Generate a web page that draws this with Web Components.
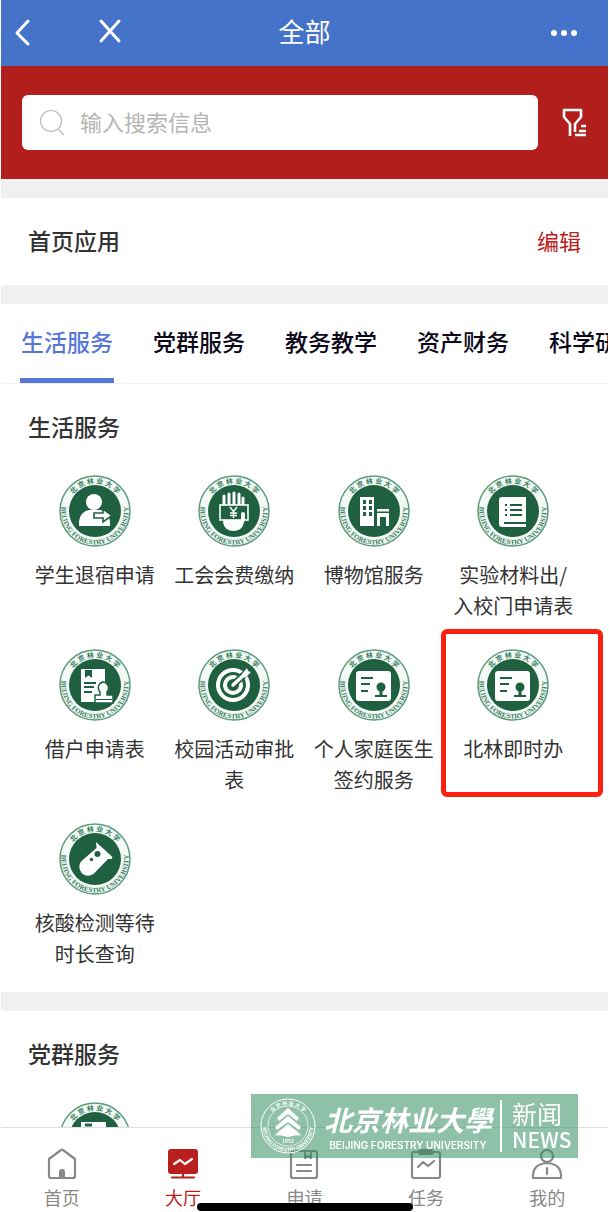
<!DOCTYPE html>
<html lang="zh-CN">
<head>
<meta charset="utf-8">
<meta name="viewport" content="width=device-width, initial-scale=1">
<title>全部</title>
<style>
  html, body { height: 100%; }
  body { margin: 0; background: #fff; color: #333; font-family: "Noto Sans CJK SC", "Noto Sans", sans-serif; }
</style>
</head>
<body>
<hall-page>
  <nav-bar slot="top">全部</nav-bar>
  <search-bar slot="top" placeholder="输入搜索信息"></search-bar>

  <hall-section>
    <section-head>首页应用<a slot="action" href="#edit">编辑</a></section-head>
  </hall-section>

  <hall-section>
    <category-tabs>
      <category-tab active>生活服务</category-tab>
      <category-tab>党群服务</category-tab>
      <category-tab>教务教学</category-tab>
      <category-tab>资产财务</category-tab>
      <category-tab>科学研究</category-tab>
    </category-tabs>
    <section-head>生活服务</section-head>
    <app-grid>
      <app-item glyph="leave">学生退宿申请</app-item>
      <app-item glyph="fee">工会会费缴纳</app-item>
      <app-item glyph="museum">博物馆服务</app-item>
      <app-item glyph="book">实验材料出/入校门申请表</app-item>
      <app-item glyph="borrow">借户申请表</app-item>
      <app-item glyph="target">校园活动审批表</app-item>
      <app-item glyph="card">个人家庭医生签约服务</app-item>
      <app-item glyph="card" marked>北林即时办</app-item>
      <app-item glyph="tube">核酸检测等待时长查询</app-item>
    </app-grid>
  </hall-section>

  <hall-section>
    <section-head>党群服务</section-head>
    <app-grid><app-item glyph="form"></app-item></app-grid>
  </hall-section>

  <tab-bar slot="bottom">
    <tab-item icon="home">首页</tab-item>
    <tab-item icon="hall" active>大厅</tab-item>
    <tab-item icon="apply">申请</tab-item>
    <tab-item icon="task">任务</tab-item>
    <tab-item icon="me">我的</tab-item>
  </tab-bar>
  <news-mark slot="bottom"></news-mark>
</hall-page>

<script>
const define = (name, html, setup) => {
  const tpl = document.createElement('template');
  tpl.innerHTML = html;
  customElements.define(name, class extends HTMLElement {
    constructor() {
      super();
      this.attachShadow({ mode: 'open' }).append(tpl.content.cloneNode(true));
    }
    connectedCallback() { if (setup) setup(this, this.shadowRoot); }
  });
};

define('hall-page', `
<style>
  :host { display: flex; flex-direction: column; position: relative; box-sizing: border-box; height: 100vh; padding: 0 1px; overflow: hidden; }
  header, footer { flex: none; }
  main { flex: 1; min-height: 0; overflow-y: auto; scrollbar-width: none; background: #f0f0f0; padding-top: 19px; display: flex; flex-direction: column; gap: 19px; }
  .home { position: absolute; left: 50%; bottom: 1px; width: 216px; height: 8px; margin-left: -108px; border-radius: 4px; background: #000; }
</style>
<header><slot name="top"></slot></header>
<main><slot></slot></main>
<footer><slot name="bottom"></slot></footer>
<div class="home"></div>`);

define('nav-bar', `
<style>
  :host { display: grid; grid-template-columns: 1fr auto 1fr; align-items: center; height: 66px; background: #4573c9; color: #fff; }
  .left { display: flex; gap: 52px; padding-left: 7px; }
  .right { display: flex; justify-content: flex-end; padding-right: 28px; }
  button { border: 0; padding: 0; background: none; color: inherit; width: 32px; height: 32px; }
  svg { display: block; fill: none; stroke: currentColor; stroke-width: 3; stroke-linecap: round; stroke-linejoin: round; }
  h1 { margin: 0; padding-bottom: 4px; font-size: 26px; font-weight: 400; line-height: 32px; }
</style>
<div class="left">
  <button aria-label="返回"><svg width="32" height="32"><path d="M20 4 9 16l11 11"/></svg></button>
  <button aria-label="关闭"><svg width="32" height="32"><path d="M9 4l18 20M27 4 9 24"/></svg></button>
</div>
<h1><slot></slot></h1>
<div class="right">
  <button aria-label="更多"><svg width="32" height="32"><g fill="currentColor" stroke="none"><circle cx="6" cy="16" r="3"/><circle cx="16" cy="16" r="3"/><circle cx="26" cy="16" r="3"/></g></svg></button>
</div>`);

define('search-bar', `
<style>
  :host { display: flex; align-items: center; gap: 20px; padding: 29px 18px 29px 21px; background: #b21e1b; }
  label { flex: 1; display: flex; align-items: center; gap: 12px; height: 55px; padding: 0 14px; border-radius: 6px; background: #fff; color: #bbb; }
  label svg { flex: none; }
  input { flex: 1; min-width: 0; border: 0; outline: 0; padding: 0 0 4px; background: none; font: 400 22px/32px "Noto Sans CJK SC", sans-serif; color: #333; }
  input::placeholder { color: #b5b5b5; opacity: 1; }
  button { flex: none; border: 0; padding: 0; background: none; width: 32px; height: 32px; color: #fff; }
  svg { display: block; fill: none; stroke: currentColor; }
</style>
<label>
  <svg width="32" height="32" stroke-width="1.200"><circle cx="15" cy="14" r="10.500"/><path d="M22 22l6 6"/></svg>
  <input type="search" aria-label="搜索">
</label>
<button aria-label="筛选"><svg width="32" height="32" stroke-width="2.600" stroke-linejoin="round">
  <path d="M12 29V17L6 10V3h17v7l-6 7v8M23 19h5M21 24h7M17 28h11"/></svg></button>`,
(el, root) => { root.querySelector('input').placeholder = el.getAttribute('placeholder'); });

define('hall-section', `
<style>:host { display: block; background: #fff; flex: none; }</style>
<slot></slot>`);

define('section-head', `
<style>
  :host { display: flex; align-items: center; justify-content: space-between; box-sizing: border-box; height: 87px; padding: 0 27px 3px; }
  h2 { margin: 0; font-size: 23px; font-weight: 500; line-height: 32px; color: #333; }
  ::slotted(a) { color: #b9201d; font-size: 22px; line-height: 32px; text-decoration: none; }
</style>
<h2><slot></slot></h2><slot name="action"></slot>`);

define('category-tabs', `
<style>
  :host { display: flex; gap: 38px; padding: 0 19px; overflow: hidden; border-bottom: 1px solid #f3f3f3; }
</style>
<slot></slot>`);

define('category-tab', `
<style>
  :host { display: block; flex: none; }
  button { display: block; height: 79px; box-sizing: border-box; border: 0; border-bottom: 5px solid transparent; padding: 0 1px; background: none; color: #0b0618; font: 500 23px/32px "Noto Sans CJK SC", sans-serif; white-space: nowrap; }
  :host([active]) button { color: #5677d8; border-color: #5677d8; }
</style>
<button><slot></slot></button>`);

define('app-grid', `
<style>
  :host { display: grid; grid-template-columns: repeat(4, 1fr); row-gap: 28px; padding: 4px 25px 23px 24px; }
</style>
<slot></slot>`);

const GLYPHS = {
  leave: `<circle cx="35" cy="27" r="8"/><path d="M20 51v-3c0-7 4-12 10-13h11c6 1 10 6 10 13v3z"/>
    <path d="M35 38h9v-4l9 6.500-9 6.500v-4h-9z" stroke="#1f6040" stroke-width="1.600"/>`,
  fee: `<path d="M26 30V21M31 30V19M36 30V18M41 30V19M45 30V23" stroke="#fff" stroke-width="3" stroke-linecap="round"/>
    <path d="M25 45c0 7 4 11 10.500 11S46 52 46 45z"/><rect x="22" y="30" width="28" height="15" fill="#1f6040" stroke="#fff" stroke-width="1.600"/>
    <path d="M32 32l3.500 4.500L39 32M35.500 36v7M32 38h7M32 40.500h7" fill="none" stroke="#fff" stroke-width="1.500"/><rect x="43" y="37" width="4" height="10" rx="2"/>`,
  museum: `<path d="M22 22h14v29H22z"/><path d="M39 34h12v2.500H39zM39 38h12v13h-3V42h-6v9h-3z"/>
    <path d="M25 25h3v4h-3zM31 25h3v4h-3zM25 31h3v4h-3zM31 31h3v4h-3zM25 37h3v4h-3zM31 37h3v4h-3z" fill="#1f6040"/>`,
  book: `<path d="M25 22h24v25H27v2h22v3H25q-3 0-3-3V25q0-3 3-3z"/>
    <path d="M28 30h2M33 30h12M28 35h2M33 35h12M28 40h2M33 40h12" stroke="#1f6040" stroke-width="2"/>`,
  borrow: `<path d="M22 20h24v33H22z"/><path d="M26 21h7v8l-3.500-2.500L26 29z" fill="#1f6040"/>
    <path d="M25 34h12M25 38h10M25 43h8" stroke="#1f6040" stroke-width="2"/>
    <path d="M44 33a6 6 0 0 1 4 10V46h6v8H36v-8h5v-3a6 6 0 0 1 3-10z" stroke="#1f6040" stroke-width="1.500"/><path d="M37 50.500h16" stroke="#1f6040"/>`,
  target: `<g fill="none" stroke="#fff"><circle cx="35" cy="36" r="15" stroke-width="4"/><circle cx="35" cy="36" r="8" stroke-width="4"/>
    <path d="M35 36L50 22" stroke="#1f6040" stroke-width="7"/><path d="M35 36L48 24" stroke-width="3.500" stroke-linecap="round"/></g><path d="M44 25l5-6 1 3 3 1-6 6z"/>`,
  card: `<rect x="18" y="22" width="35" height="30" rx="3"/><path d="M23 29h12M23 35h9M23 42h7M37 47h12" stroke="#1f6040" stroke-width="2.200"/>
    <circle cx="43" cy="38" r="4.500" fill="#1f6040"/><path d="M43 40v7" stroke="#1f6040" stroke-width="3"/>`,
  tube: `<path d="M37 19L53.500 34l-1 2H49L35 50.500Q29 55 23 50.500 18 44 22 38.500L37.500 25z"/><circle cx="38.500" cy="31" r="3" fill="#1f6040"/><circle cx="32.500" cy="36.500" r="1.700" fill="#1f6040"/>`,
  form: `<path d="M22 20h25v33H22z"/><path d="M26 23h7" stroke="#1f6040" stroke-width="3"/>`
};

define('app-item', `
<style>
  :host { display: block; position: relative; min-width: 0; }
  a { display: flex; flex-direction: column; align-items: center; gap: 12px; color: #333; text-decoration: none; }
  svg { display: block; width: 72px; height: 72px; }
  span { box-sizing: border-box; width: 100%; min-height: 62px; padding: 0 8px; font-size: 20px; line-height: 31px; text-align: center; }
  .mark { display: none; }
  :host([marked]) .mark { display: block; position: absolute; inset: -20px -20px 0 -3px; box-sizing: border-box; height: 168px; border: 5px solid #ff2014; border-radius: 6px; pointer-events: none; }
  text { font-family: "Liberation Serif", "Noto Sans CJK SC", serif; font-weight: 700; fill: #3a7d5e; }
</style>
<a href="#app">
  <svg viewBox="0 0 72 72" aria-hidden="true">
    <defs><path id="up" d="M8.500 36a27.500 27.500 0 0 1 55 0"/><path id="down" d="M4.200 25A33.600 33.600 0 1 0 67.800 25"/></defs>
    <circle cx="36" cy="36" r="35" fill="#f3faf6" stroke="#5d9a80" stroke-width="1.500"/>
    <circle cx="36" cy="36" r="26" fill="#1f6040"/>
    <text font-size="7"><textPath href="#up" startOffset="50%" text-anchor="middle">北  京  林  业  大  学</textPath></text>
    <text font-size="7"><textPath href="#down" startOffset="50%" text-anchor="middle">BEIJING FORESTRY UNIVERSITY</textPath></text>
    <g class="glyph" fill="#fff"></g>
  </svg>
  <span><slot></slot></span>
</a>
<div class="mark"></div>`,
(el, root) => { root.querySelector('.glyph').innerHTML = GLYPHS[el.getAttribute('glyph')]; });

define('tab-bar', `
<style>
  :host { display: grid; grid-template-columns: repeat(5, 1fr); height: 84px; border-top: 1px solid #ddd; background: #fff; }
</style>
<slot></slot>`);

const ICONS = {
  home: `<path d="M3 11v17q0 2 2 2h22q2 0 2-2V11L17 2q-1-1-2 0z"/><path d="M13 29v-5q0-3 3-3t3 3v5z" fill="currentColor" stroke="none"/>`,
  hall: `<rect x="1" y="1" width="30" height="25" rx="3" fill="currentColor" stroke="none"/><path d="M5 29.500h22M16 26v3"/><path d="M7 16l6-4 5 4 7-5" stroke="#fff"/>`,
  apply: `<path d="M3 3v25q0 2 2 2h22q2 0 2-2V5q0-2-2-2H3M9 17h14M9 23h14M17 3v7l3-2 3 2V3"/>`,
  task: `<rect x="2" y="4" width="28" height="26" rx="2"/><path d="M9 4q0-2 2-2h10q2 0 2 2t-2 2H11q-2 0-2-2z"/><path d="M8 19l5-5 5 4 6-5"/>`,
  me: `<circle cx="16" cy="8" r="6"/><path d="M2 30q-1-14 14-15 15 1 14 15zM16 20v6"/>`
};

define('tab-item', `
<style>
  :host { display: block; color: #888; }
  :host([active]) { color: #b9201d; }
  button { width: 100%; border: 0; padding: 20px 0 0; background: none; color: inherit; display: flex; flex-direction: column; align-items: center; gap: 3px; font: 400 18px/28px "Noto Sans CJK SC", sans-serif; }
  svg { display: block; width: 32px; height: 32px; fill: none; stroke: currentColor; stroke-width: 2.200; stroke-linejoin: round; stroke-linecap: round; }
</style>
<button><svg viewBox="0 0 32 32" aria-hidden="true"></svg><slot></slot></button>`,
(el, root) => { root.querySelector('svg').innerHTML = ICONS[el.getAttribute('icon')]; });

define('news-mark', `
<style>
  :host { position: absolute; right: 31px; bottom: 54px; box-sizing: border-box; width: 327px; height: 64px; padding: 5px 9px; display: flex; align-items: center; gap: 6px; background: rgba(51, 142, 99, .55); color: #fff; }
  svg { display: block; flex: none; }
  svg text { fill: #fff; font-family: "Noto Sans CJK SC", sans-serif; font-weight: 700; }
  .name { flex: none; width: 172px; text-align: center; white-space: nowrap; }
  .zh { font-size: 28px; font-weight: 700; font-style: italic; line-height: 38px; }
  .en { font: 600 10px/14px Inter, sans-serif; }
  .news { border-left: 2px solid #fff; padding-left: 10px; height: 52px; white-space: nowrap; }
  .news div { font-size: 25px; line-height: 26px; }
  .news .latin { font: 500 21px/26px "Noto Sans CJK SC", sans-serif; }
</style>
<svg width="56" height="56" viewBox="0 0 56 56">
  <defs><path id="u" d="M7 28a21 21 0 0 1 42 0"/><path id="d" d="M3.500 21A25.500 25.500 0 1 0 52.500 21"/></defs>
  <g fill="none" stroke="#fff"><circle cx="28" cy="28" r="27"/><circle cx="28" cy="28" r="20" stroke-width=".7"/></g>
  <text font-size="5"><textPath href="#u" startOffset="50%" text-anchor="middle">北  京  林  业  大  学</textPath></text>
  <text font-size="5"><textPath href="#d" startOffset="50%" text-anchor="middle">BEIJING FORESTRY UNIVERSITY</textPath></text>
  <path d="M28 10l11 10-2 3-9-7-9 7-2-3zM28 18l13 11-2 3-11-8-11 8-2-3zM28 26l11 9q0 2 5 2-10 0-16 2-6-2-16-2 5 0 5-2z" fill="#fff"/>
  <text x="28" y="45" font-size="5" text-anchor="middle">1952</text>
</svg>
<div class="name"><div class="zh">北京林业大學</div><div class="en">BEIJING FORESTRY UNIVERSITY</div></div>
<div class="news"><div>新闻</div><div class="latin">NEWS</div></div>`);
</script>
</body>
</html>
